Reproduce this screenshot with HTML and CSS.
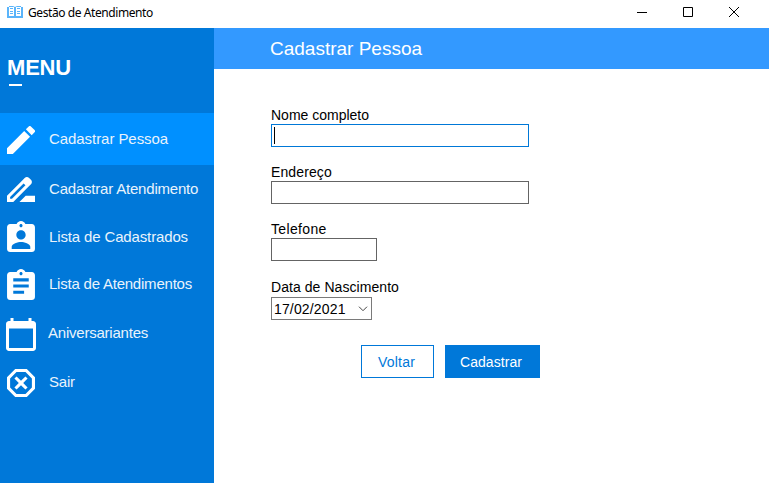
FILE: index.html
```html
<!DOCTYPE html>
<html lang="pt-BR">
<head>
<meta charset="utf-8">
<title>Gestão de Atendimento</title>
<link rel="stylesheet" href="styles.css">
</head>
<body>
<header class="titlebar">
  <svg class="app-icon" width="16" height="12" viewBox="0 0 16 12"><path fill="#5ab4fa" d="M0 1h2V0h4l2 1 2-1h4v1h2v11H0z"/><path fill="#fff" d="M2 1h5v9H2zM9 1h5v9H9z"/><path stroke="#5ab4fa" d="M3 2.500h3M3 5.500h3M3 7.500h3M10 2.500h3M10 5.500h3M10 7.500h3"/></svg>
  <span class="app-title">Gestão de Atendimento</span>
  <div class="controls">
    <svg width="10" height="10" viewBox="0 0 10 10"><path stroke="#000" d="M0 5.500h10"/></svg>
    <svg width="10" height="10" viewBox="0 0 10 10"><path fill="none" stroke="#000" d="M.5.5h9v9h-9z"/></svg>
    <svg width="10" height="10" viewBox="0 0 10 10"><path stroke="#000" d="M0 0l10 10M10 0L0 10"/></svg>
  </div>
</header>
<div class="window">
  <nav class="sidebar">
    <div class="menu-head"><h1>MENU</h1><div class="dash"></div></div>
    <a class="item active"><svg width="28" height="28" viewBox="3 3 18 18"><path d="M3 17.250V21h3.750L17.810 9.940l-3.750-3.750L3 17.250zM20.710 7.040a1 1 0 0 0 0-1.410l-2.340-2.340a1 1 0 0 0-1.410 0l-1.830 1.830 3.750 3.750 1.830-1.830z"/></svg><span>Cadastrar Pessoa</span></a>
    <a class="item attend"><svg width="28" height="25" viewBox="3 4 18 16"><path d="M18.410 5.800L17.200 4.590c-.78-.78-2.050-.78-2.830 0l-2.680 2.680L3 15.960V20h4.040l8.740-8.740 2.630-2.630c.79-.78.79-2.050 0-2.830zM6.210 18H5v-1.210l8.660-8.660 1.210 1.210L6.210 18zM11 20l4-4h6v4H11z"/></svg><span>Cadastrar Atendimento</span></a>
    <a class="item people"><svg width="28" height="31" viewBox="3 1 18 20"><path d="M19 3h-4.180C14.400 1.840 13.300 1 12 1s-2.400.84-2.820 2H5c-1.100 0-2 .9-2 2v14c0 1.100.9 2 2 2h14c1.100 0 2-.9 2-2V5c0-1.100-.9-2-2-2zm-7 0c.55 0 1 .45 1 1s-.45 1-1 1-1-.45-1-1 .45-1 1-1zm0 4c1.660 0 3 1.340 3 3s-1.340 3-3 3-3-1.340-3-3 1.340-3 3-3zm6 12H6v-1.400c0-2 4-3.100 6-3.100s6 1.100 6 3.100V19z"/></svg><span>Lista de Cadastrados</span></a>
    <a class="item list"><svg width="28" height="31" viewBox="3 1 18 20"><path d="M19 3h-4.180C14.400 1.840 13.300 1 12 1s-2.400.84-2.820 2H5c-1.100 0-2 .9-2 2v14c0 1.100.9 2 2 2h14c1.100 0 2-.9 2-2V5c0-1.100-.9-2-2-2zm-7 0c.55 0 1 .45 1 1s-.45 1-1 1-1-.45-1-1 .45-1 1-1zm2 14H7v-2h7v2zm3-4H7v-2h10v2zm0-4H7V7h10v2z"/></svg><span>Lista de Atendimentos</span></a>
    <a class="item birthdays"><svg width="30" height="33" viewBox="2 1 20 22"><path d="M20 3h-1V1h-2v2H7V1H5v2H4c-1.100 0-2 .9-2 2v16c0 1.100.9 2 2 2h16c1.100 0 2-.9 2-2V5c0-1.100-.9-2-2-2zm0 18H4V8h16v13z"/></svg><span>Aniversariantes</span></a>
    <a class="item exit"><svg width="28" height="28" viewBox="3 3 18 18"><path d="M15.730 3H8.270L3 8.270v7.460L8.270 21h7.460L21 15.730V8.270L15.730 3zM19 14.900L14.900 19H9.100L5 14.900V9.100L9.100 5h5.800L19 9.100v5.800zM14.830 7.760L12 10.590 9.170 7.760 7.760 9.170 10.590 12l-2.830 2.830 1.410 1.410L12 13.410l2.830 2.830 1.410-1.410L13.410 12l2.830-2.830z"/></svg><span>Sair</span></a>
  </nav>
  <main>
    <h2>Cadastrar Pessoa</h2>
    <form>
      <div class="field"><label>Nome completo</label><div class="input focused"><i class="caret"></i></div></div>
      <div class="field address"><label>Endereço</label><div class="input"></div></div>
      <div class="field phone"><label>Telefone</label><div class="input short"></div></div>
      <div class="field birth"><label>Data de Nascimento</label><div class="input date"><span>17/02/2021</span><svg width="10" height="6" viewBox="0 0 10 6"><path fill="none" stroke="#444" d="M1 .7l4 4 4-4"/></svg></div></div>
      <div class="actions"><button type="button" class="outline">Voltar</button><button type="button" class="solid">Cadastrar</button></div>
    </form>
  </main>
</div>
</body>
</html>
```
FILE: styles.css
```css
* { box-sizing: border-box; }
body { margin: 0; width: 769px; height: 483px; overflow: hidden; background: #fff; font-family: "Liberation Sans", Arial, sans-serif; color: #000; }
svg { display: block; flex: none; }
.titlebar { height: 28px; display: flex; align-items: center; padding: 0 30px 4px 7px; }
.app-title { margin-left: 5px; font: 12px/16px "Noto Sans", sans-serif; letter-spacing: -0.42px; white-space: nowrap; padding-top: 2px; }
.controls { margin-left: auto; display: flex; gap: 36px; }
.window { display: flex; height: 455px; }
.sidebar { width: 214px; background: #0078d9; color: #e9f3fc; font-size: 15px; }
.menu-head { height: 85px; padding: 26px 0 0 7px; }
h1 { margin: 0; font-size: 22px; line-height: 27px; letter-spacing: -0.2px; color: #fff; }
.dash { width: 13px; height: 2px; background: #fff; margin: 3px 0 0 2px; }
.item { display: flex; align-items: center; gap: 14px; height: 48px; padding-left: 7px; white-space: nowrap; }
.item svg { fill: #fff; }
.item span { line-height: 18px; }
.active { height: 52px; background: #0090ff; padding-top: 2px; letter-spacing: -0.06px; }
.active span { margin-bottom: 2px; }
.attend { letter-spacing: -0.2px; }
.people { letter-spacing: -0.14px; }
.people svg, .list svg { margin-bottom: 1px; }
.list { height: 47px; letter-spacing: -0.22px; }
.list span { margin-bottom: 1px; }
.birthdays { height: 50px; padding-left: 6px; gap: 12px; padding-top: 2px; letter-spacing: -0.22px; }
.birthdays span { margin-bottom: 2px; }
.exit { letter-spacing: -0.2px; }
.exit svg { margin-top: 2px; }
main { flex: 1; }
h2 { margin: 0; height: 41px; padding-left: 56px; background: #3399ff; color: #fff; font-weight: normal; font-size: 19px; line-height: 42px; }
form { padding: 38px 0 0 57px; font-size: 14px; }
.field { height: 57px; }
.address label { letter-spacing: 0.12px; }
.phone { height: 58px; }
.phone label { letter-spacing: 0.35px; }
.birth label { height: 18px; letter-spacing: 0.06px; }
label { display: block; height: 17px; line-height: 17px; }
.input { width: 258px; height: 23px; border: 1px solid #646464; display: flex; align-items: center; }
.focused { border-color: #0078d7; }
.caret { width: 1px; height: 17px; background: #000; margin-left: 2px; }
.short { width: 106px; }
.date { width: 101px; border-color: #7a7a7a; justify-content: space-between; padding: 0 3px 0 2px; letter-spacing: 0.15px; }
.actions { display: flex; gap: 11px; margin: 9px 0 0 90px; }
button { height: 33px; padding: 1px 0 0; font: 14px "Liberation Sans", Arial, sans-serif; border: 1px solid #0078d9; }
.outline { width: 73px; background: #fff; color: #0078d9; padding-right: 2px; letter-spacing: 0.2px; }
.solid { width: 95px; background: #0078d9; color: #fff; padding-right: 3px; letter-spacing: 0.05px; }
```
